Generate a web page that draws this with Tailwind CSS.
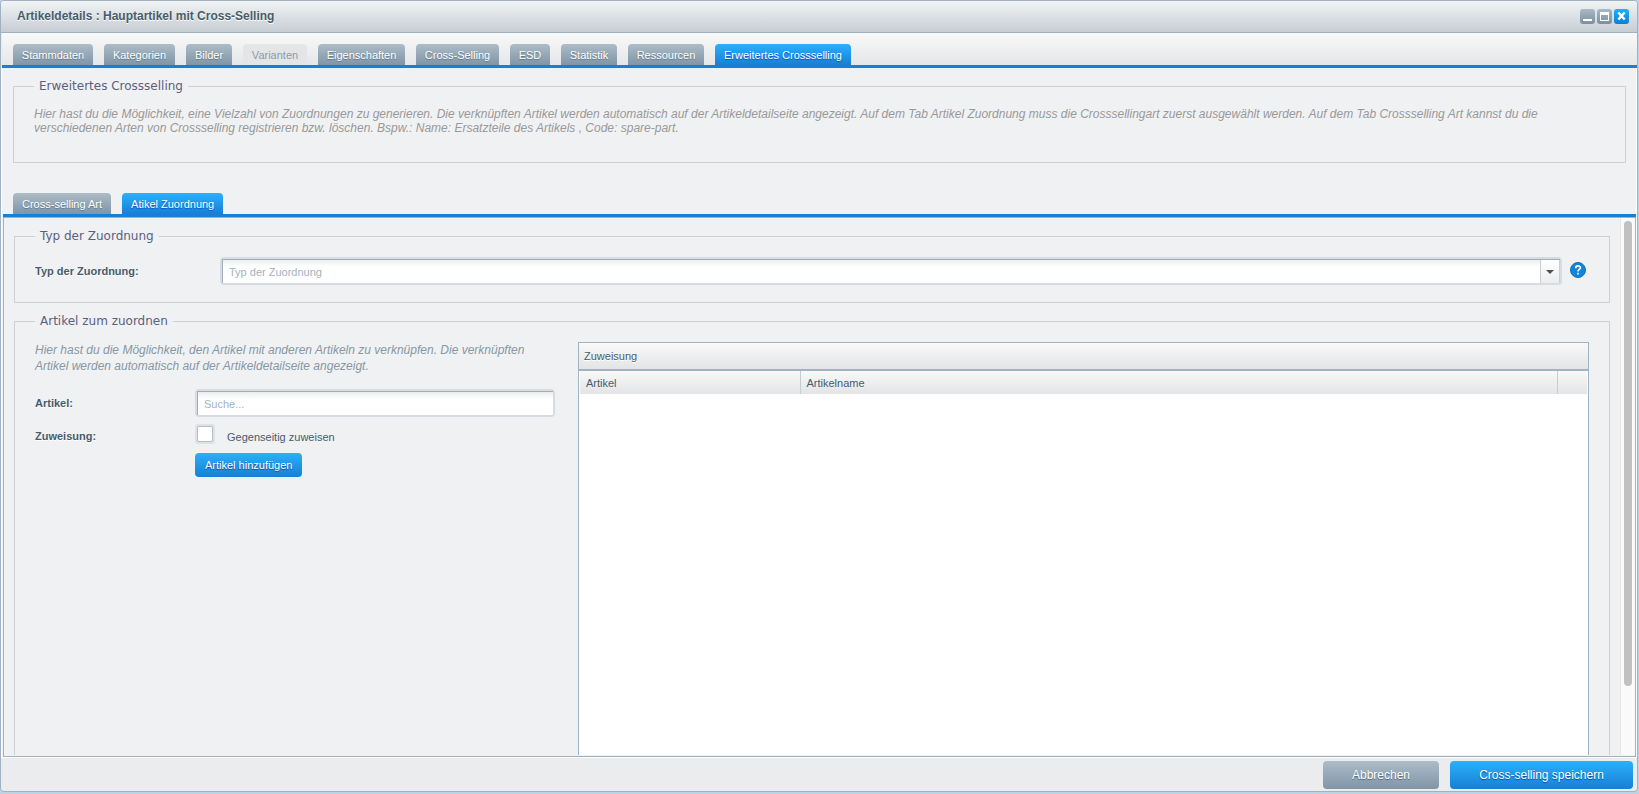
<!DOCTYPE html>
<html lang="de">
<head>
<meta charset="utf-8">
<title>Artikeldetails : Hauptartikel mit Cross-Selling</title>
<script src="https://cdn.jsdelivr.net/npm/@tailwindcss/browser@4"></script>
</head>
<body class="h-screen overflow-hidden bg-[#bcd3e6] pr-px pb-0.5 font-['Liberation_Sans',Arial,sans-serif] text-[11px] leading-[14px] text-[#475c6a]">
<main class="flex h-full flex-col overflow-hidden rounded-[4px] border border-[#a0b1c1] bg-[#ebecee]">

  <!-- Window title -->
  <header class="flex h-8 shrink-0 items-center justify-between border-b border-[#9fb0bf] bg-linear-to-b from-[#f3f4f4] to-[#c5cdd4] pb-px pl-4 pr-2">
    <h1 class="text-[12px] font-bold [text-shadow:0_1px_0_#fff]">Artikeldetails : Hauptartikel mit Cross-Selling</h1>
    <div class="flex gap-0.5">
      <button type="button" aria-label="Minimieren" class="size-[15px] rounded-[3px] bg-linear-to-b from-[#a9bac7] to-[#7a8f9f]"><svg viewBox="0 0 15 15" class="size-full"><path d="M3 10h9v2H3z" fill="#fff"/></svg></button>
      <button type="button" aria-label="Maximieren" class="size-[15px] rounded-[3px] bg-linear-to-b from-[#a9bac7] to-[#7a8f9f]"><svg viewBox="0 0 15 15" class="size-full"><path fill-rule="evenodd" d="M3 3h9v9H3zM4 6v5h7V6z" fill="#fff"/></svg></button>
      <button type="button" aria-label="Schließen" class="size-[15px] rounded-[3px] bg-linear-to-b from-[#1fb0fb] to-[#0b7fd8]"><svg viewBox="0 0 15 15" class="size-full"><path d="M4.300 3.500l6.400 7M10.700 3.500l-6.400 7" stroke="#fff" stroke-width="2.500"/></svg></button>
    </div>
  </header>

  <!-- Main tabs -->
  <nav class="flex h-[35px] shrink-0 items-end gap-[11px] border-b-3 border-[#187fd6] bg-linear-to-b from-[#f9f9f9] to-[#e5e6e8] pl-[11px] ml-px text-white">
    <button type="button" class="h-[21px] w-[80px] rounded-t-[4px] bg-linear-to-b from-[#adbcc8] to-[#8095a6] [text-shadow:0_1px_1px_#5f7485]">Stammdaten</button>
    <button type="button" class="h-[21px] w-[71px] rounded-t-[4px] bg-linear-to-b from-[#adbcc8] to-[#8095a6] [text-shadow:0_1px_1px_#5f7485]">Kategorien</button>
    <button type="button" class="h-[21px] w-[46px] rounded-t-[4px] bg-linear-to-b from-[#adbcc8] to-[#8095a6] [text-shadow:0_1px_1px_#5f7485]">Bilder</button>
    <button type="button" disabled class="h-[21px] w-[64px] rounded-t-[4px] bg-[#e4e5e7] text-[#8c9ba8]">Varianten</button>
    <button type="button" class="h-[21px] w-[87px] rounded-t-[4px] bg-linear-to-b from-[#adbcc8] to-[#8095a6] [text-shadow:0_1px_1px_#5f7485]">Eigenschaften</button>
    <button type="button" class="h-[21px] w-[83px] rounded-t-[4px] bg-linear-to-b from-[#adbcc8] to-[#8095a6] [text-shadow:0_1px_1px_#5f7485]">Cross-Selling</button>
    <button type="button" class="h-[21px] w-[40px] rounded-t-[4px] bg-linear-to-b from-[#adbcc8] to-[#8095a6] [text-shadow:0_1px_1px_#5f7485]">ESD</button>
    <button type="button" class="h-[21px] w-[56px] rounded-t-[4px] bg-linear-to-b from-[#adbcc8] to-[#8095a6] [text-shadow:0_1px_1px_#5f7485]">Statistik</button>
    <button type="button" class="h-[21px] w-[76px] rounded-t-[4px] bg-linear-to-b from-[#adbcc8] to-[#8095a6] [text-shadow:0_1px_1px_#5f7485]">Ressourcen</button>
    <button type="button" class="h-[21px] w-[136px] rounded-t-[4px] bg-linear-to-b from-[#2cb0fa] to-[#187fd6] [text-shadow:0_1px_1px_#0a4ad0]">Erweitertes Crossselling</button>
  </nav>

  <div class="flex min-h-0 flex-1 flex-col border-x border-b border-white bg-[#f0f1f3] pl-px">
    <fieldset class="mx-[10px] mt-[11px] shrink-0 border border-[#cdd1d5] px-5 pt-[13px] pb-[27px]">
      <legend class="h-[15px] px-[5px] font-['DejaVu_Sans',Verdana,sans-serif] text-[12px] leading-[15px] text-[#5c6080]">Erweitertes Crossselling</legend>
      <p class="text-[12px] italic text-[#999]">Hier hast du die Möglichkeit, eine Vielzahl von Zuordnungen zu generieren. Die verknüpften Artikel werden automatisch auf der Artikeldetailseite angezeigt. Auf dem Tab Artikel Zuordnung muss die Crosssellingart zuerst ausgewählt werden. Auf dem Tab Crossselling Art kannst du die verschiedenen Arten von Crossselling registrieren bzw. löschen. Bspw.: Name: Ersatzteile des Artikels , Code: spare-part.</p>
    </fieldset>

    <!-- Nested tabs -->
    <nav class="mt-[30px] flex shrink-0 gap-[11px] border-b-3 border-[#187fd6] pl-[10px] text-white">
      <button type="button" class="h-[21px] rounded-t-[4px] bg-linear-to-b from-[#adbcc8] to-[#8095a6] px-[9px] [text-shadow:0_1px_1px_#5f7485]">Cross-selling Art</button>
      <button type="button" class="h-[21px] rounded-t-[4px] bg-linear-to-b from-[#2cb0fa] to-[#187fd6] px-[9px] [text-shadow:0_1px_1px_#0a4ad0]">Atikel Zuordnung</button>
    </nav>

    <section class="flex min-h-0 flex-1 border border-[#a0b1c1] pb-px">
      <div class="flex min-w-0 flex-1 flex-col overflow-hidden px-[10px] pt-[11px]">
        <fieldset class="shrink-0 border border-[#cdd1d5] px-5 pt-[13px] pb-[17px]">
          <legend class="h-[15px] px-[5px] font-['DejaVu_Sans',Verdana,sans-serif] text-[12px] leading-[15px] text-[#5c6080]">Typ der Zuordnung</legend>
          <div class="flex items-center">
            <label for="typ" class="w-[185px] shrink-0 font-bold [text-shadow:0_1px_0_#fff]">Typ der Zuordnung:</label>
            <div class="flex h-7 min-w-0 flex-1 rounded-[4px] border-2 border-[#d6dce2] bg-white">
              <div class="flex flex-1 border-t border-l border-[#a0aebb] bg-linear-to-b from-[#eceeee] to-white to-30%">
                <input id="typ" type="text" role="combobox" aria-expanded="false" aria-controls="typ" placeholder="Typ der Zuordnung" class="min-w-0 flex-1 px-[6px] outline-none placeholder:text-[#9fb3c1]">
                <button type="button" aria-label="Auswahl öffnen" class="flex w-5 items-center justify-center border-x border-[#c8ced4] bg-linear-to-b from-white to-[#eceded]"><svg viewBox="0 0 8 4" class="h-1 w-2"><path d="M0 0h8L4 4z" fill="#46535f"/></svg></button>
              </div>
            </div>
            <button type="button" aria-label="Hilfe" class="mr-[3px] mb-[3px] ml-2 size-4 shrink-0"><svg viewBox="0 0 16 16" class="size-full"><circle cx="8" cy="8" r="7.500" fill="#0f86da" stroke="#1c6cae"/><path d="M5.700 6.200c0-3 4.700-3 4.700-.4C10.400 7.500 8 7.500 8 9.500M8 10.800v1.700" fill="none" stroke="#fff" stroke-width="1.600"/></svg></button>
          </div>
        </fieldset>

        <fieldset class="mt-[11px] shrink-0 border border-[#cdd1d5] px-5 pt-[13px] pb-5">
          <legend class="h-[15px] px-[5px] font-['DejaVu_Sans',Verdana,sans-serif] text-[12px] leading-[15px] text-[#5c6080]">Artikel zum zuordnen</legend>
          <div class="grid grid-cols-[520px_1fr] gap-[23px]">
            <div>
              <p class="pr-2 text-[12px] leading-4 text-[#8798a3] italic">Hier hast du die Möglichkeit, den Artikel mit anderen Artikeln zu verknüpfen. Die verknüpften Artikel werden automatisch auf der Artikeldetailseite angezeigt.</p>
              <div class="mt-[15px] flex items-center">
                <label for="artikel" class="w-40 shrink-0 font-bold [text-shadow:0_1px_0_#fff]">Artikel:</label>
                <div class="flex h-7 min-w-0 flex-1 rounded-[4px] border-2 border-[#d6dce2] bg-white">
                  <input id="artikel" type="text" placeholder="Suche..." class="min-w-0 flex-1 border-t border-l border-[#a0aebb] bg-linear-to-b from-[#eceeee] to-white to-30% px-[6px] outline-none placeholder:text-[#9fb3c1]">
                </div>
              </div>
              <div class="mt-[7px] flex items-center">
                <span class="w-40 shrink-0 pt-1 font-bold [text-shadow:0_1px_0_#fff]">Zuweisung:</span>
                <span class="mr-3 flex size-5 rounded-[3px] bg-[#dfe1e4] p-0.5"><input id="gegenseitig" type="checkbox" class="size-4 appearance-none rounded-[2px] border border-[#b4bec7] bg-white checked:bg-[#187fd6]"></span>
                <label for="gegenseitig" class="pt-[6px]">Gegenseitig zuweisen</label>
              </div>
              <button type="button" class="mt-[9px] ml-40 h-6 rounded-[4px] bg-linear-to-b from-[#2cb0fa] to-[#187fd6] px-[10px] text-white [text-shadow:0_1px_1px_#0a4a90]">Artikel hinzufügen</button>
            </div>

            <div class="h-[480px] border border-[#9fb3c1] bg-white">
              <h2 id="zuweisung" class="h-7 border-b-2 border-[#9fb3c1] bg-linear-to-b from-[#f9f9f9] to-[#e3e4e6] pl-[5px] leading-[27px] [text-shadow:0_1px_0_#fff]">Zuweisung</h2>
              <div class="px-px">
                <table aria-labelledby="zuweisung" class="w-full table-fixed border-collapse bg-linear-to-b from-[#f9f9f9] to-[#e3e4e6] text-left">
                  <thead>
                    <tr class="h-[23px]">
                      <th scope="col" class="w-[220px] border-r border-[#c5ccd2] pl-[6px] font-normal">Artikel</th>
                      <th scope="col" class="border-r border-[#c5ccd2] pl-[6px] font-normal">Artikelname</th>
                      <td class="w-[30px]"></td>
                    </tr>
                  </thead>
                </table>
              </div>
            </div>
          </div>
        </fieldset>
      </div>
      <div class="w-[15px] shrink-0 border-l border-[#e7e7e7] bg-[#fafafa] pt-[3px] pl-[3px]">
        <div class="h-[87%] w-2 rounded-full bg-[#c1c1c1]"></div>
      </div>
    </section>
  </div>

  <!-- Actions -->
  <footer class="flex h-[33px] shrink-0 justify-end gap-[11px] pt-[3px] pr-1 text-[12px] text-white">
    <button type="button" class="h-7 w-[116px] rounded-[4px] bg-linear-to-b from-[#adbcc8] to-[#8095a6] [text-shadow:0_1px_1px_#4f6475]">Abbrechen</button>
    <button type="button" class="h-7 w-[183px] rounded-[4px] bg-linear-to-b from-[#2cb0fa] to-[#187fd6] [text-shadow:0_1px_1px_#0a4a90]">Cross-selling speichern</button>
  </footer>
</main>
</body>
</html>
